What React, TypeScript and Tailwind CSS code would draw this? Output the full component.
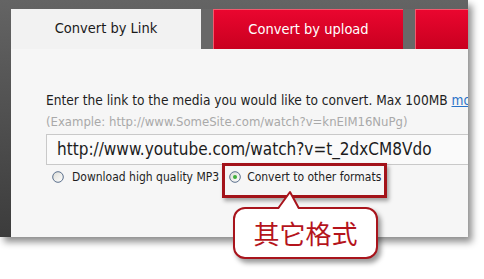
import React from "react";

function Radio({ checked }: { checked?: boolean }) {
  return (
    <svg width="12" height="12" viewBox="0 0 12 12" className="shrink-0">
      <defs>
        <linearGradient id={checked ? "rg1" : "rg0"} x1="0" y1="0" x2="1" y2="1">
          <stop offset="0" stopColor="#dcdcd6" />
          <stop offset="1" stopColor="#ffffff" />
        </linearGradient>
      </defs>
      <circle cx="6" cy="6" r="5.3" fill={`url(#${checked ? "rg1" : "rg0"})`} stroke="#5a6f8c" strokeWidth="1" />
      {checked && <circle cx="6" cy="6" r="2" fill="#3fae3a" />}
    </svg>
  );
}

export default function App() {
  return (
    <div className="relative w-[484px] h-[279px] bg-white overflow-hidden" style={{ fontFamily: '"DejaVu Sans Condensed", "Liberation Sans", sans-serif' }}>
      <div className="w-[468px] h-[237px] bg-gradient-to-b from-[#646464] to-[#3c3c3c] flex flex-col pl-[11px] pt-[9px] shadow-[4px_5px_7px_rgba(0,0,0,0.45)]">
        <div className="flex h-[40px] shrink-0">
          <div className="w-[190px] bg-[#f2f2f2] flex items-center justify-center text-[14.5px] text-[#1a1a1a]">Convert by Link</div>
          <div className="w-[12px] bg-[#686868]" />
          <div className="w-[190px] bg-gradient-to-b from-[#ea062f] to-[#c9001f] border-t border-l border-[#f25a6e] flex items-center justify-center text-[14.5px] text-white">Convert by upload</div>
          <div className="w-[12px] bg-[#686868]" />
          <div className="flex-1 bg-gradient-to-b from-[#ea062f] to-[#c9001f] border-t border-l border-[#f25a6e]" />
        </div>
        <div className="flex-1 bg-[#f6f6f6] pl-[35px] pt-[43px] overflow-hidden flex flex-col">
          <div className="h-[16px] leading-[16px] text-[13.6px] text-[#1e1e1e] whitespace-nowrap">
            Enter the link to the media you would like to convert. Max 100MB <span className="text-[#2a72c8] underline">mo</span>
          </div>
          <div className="mt-[6px] h-[16px] leading-[16px] text-[13px] text-[#a9a9a9] whitespace-nowrap">
            (Example: http://www.SomeSite.com/watch?v=knEIM16NuPg)
          </div>
          <div className="mt-[4px] h-[31px] w-[460px] shrink-0 border border-[#c9c9c9] bg-[#fafafa] pl-[10px] flex items-center text-[17px] text-[#1c1c1c] whitespace-nowrap">
            http://www.youtube.com/watch?v=t_2dxCM8Vdo
          </div>
          <div className="mt-[2px] h-[20px] flex items-center pl-[6px] text-[12px] text-[#1e1e1e] whitespace-nowrap">
            <Radio />
            <span className="ml-[8px]">Download high quality MP3</span>
            <span className="ml-[10px]"><Radio checked /></span>
            <span className="ml-[6px]">Convert to other formats</span>
          </div>
        </div>
      </div>

      {/* highlight box */}
      <div className="absolute left-[222px] top-[163px] w-[165px] h-[35px] border-[3px] border-[#a3131a] shadow-[2px_3px_4px_rgba(0,0,0,0.35)]" />

      {/* callout */}
      <div className="absolute left-[233px] top-[207px] w-[145px] h-[52px] rounded-[12px] border-2 border-[#a8141c] bg-white shadow-[3px_4px_5px_rgba(0,0,0,0.4)] flex items-center justify-center">
        <span className="text-[26px] leading-none text-[#b5141c]" style={{ fontFamily: '"Noto Sans CJK SC", sans-serif' }}>其它格式</span>
      </div>
      <svg className="absolute left-[274px] top-[190px]" width="28" height="20" viewBox="274 190 28 20">
        <polygon points="278,210 290,192 299,210" fill="#ffffff" />
        <polyline points="278,208.5 290,192 299,208.5" fill="none" stroke="#a8141c" strokeWidth="2" strokeLinejoin="round" />
      </svg>
    </div>
  );
}
